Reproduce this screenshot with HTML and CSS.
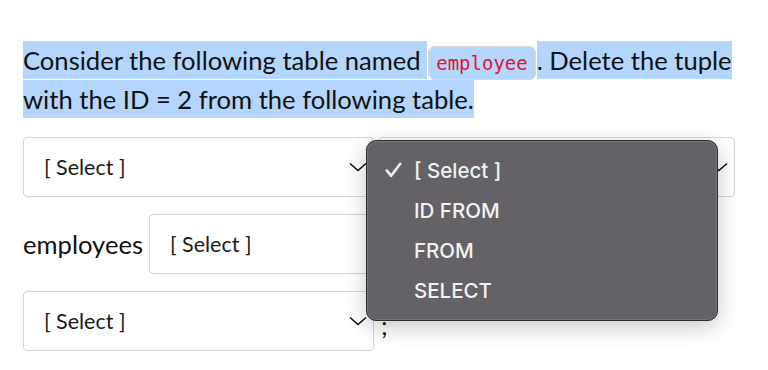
FILE: index.html
```html
<!DOCTYPE html>
<html lang="en">
<head>
  <meta charset="UTF-8" />
  <meta name="viewport" content="width=device-width, initial-scale=1.0"/>
  <title>Question</title>
  <link rel="stylesheet" href="styles.css">
</head>
<body>
  <div class="page">
    <p class="question"><span class="hl">Consider the following table named </span><code class="code">employee</code><span class="hl">. Delete the tuple with the ID = 2 from the following table.</span></p>

    <div class="answer">
      <div class="row">
        <div class="select">
          <span>[ Select ]</span>
          <svg class="chev" width="18" height="10" viewBox="0 0 18 10"><path d="M1 1.5 L9 8.5 L17 1.5" fill="none" stroke="#111" stroke-width="1.6"/></svg>
        </div>
        <div class="select wide">
          <span>[ Select ]</span>
          <svg class="chev" width="18" height="10" viewBox="0 0 18 10"><path d="M1 1.5 L9 8.5 L17 1.5" fill="none" stroke="#111" stroke-width="1.6"/></svg>
        </div>
      </div>

      <div class="row">
        <span class="word">employees</span>
        <div class="select">
          <span>[ Select ]</span>
          <svg class="chev" width="18" height="10" viewBox="0 0 18 10"><path d="M1 1.5 L9 8.5 L17 1.5" fill="none" stroke="#111" stroke-width="1.6"/></svg>
        </div>
      </div>

      <div class="row">
        <div class="select">
          <span>[ Select ]</span>
          <svg class="chev" width="18" height="10" viewBox="0 0 18 10"><path d="M1 1.5 L9 8.5 L17 1.5" fill="none" stroke="#111" stroke-width="1.6"/></svg>
        </div>
        <span class="word semi">;</span>
      </div>
    </div>

    <!-- open dropdown of the second select -->
    <ul class="menu">
      <li>
        <span class="mark"><svg width="17" height="16" viewBox="0 0 17 16"><path d="M1.8 8.5 L6.2 13.8 L15.2 1.8" fill="none" stroke="#f2f2f2" stroke-width="2.6" stroke-linecap="round" stroke-linejoin="round"/></svg></span>
        <span>[ Select ]</span>
      </li>
      <li><span class="mark"></span><span>ID FROM</span></li>
      <li><span class="mark"></span><span>FROM</span></li>
      <li><span class="mark"></span><span>SELECT</span></li>
    </ul>
  </div>
</body>
</html>
```

FILE: styles.css
```css
body {
  margin: 0;
  background-color: #ffffff;
  font-family: Lato, 'Open Sans', sans-serif;
  color: #111;
  overflow: hidden;
}

.page {
  position: relative;
  padding: 41px 23px 0 23px;
}

.question {
  margin: 0;
  font-size: 25.6px;
  line-height: 39px;
  width: 722px;
}

.hl {
  background-color: #b4d6fd;
  padding: 4px 0;
}

.code {
  font-family: 'DejaVu Sans Mono', monospace;
  font-size: 19px;
  line-height: 1;
  color: #e5132f;
  background-color: #b4d6fd;
  border: 1px solid #d9d9d9;
  border-radius: 7px;
  padding: 5px 7px;
  margin: 0 1px 0 1px;
}

.answer {
  display: flex;
  flex-direction: column;
  gap: 17px;
  margin-top: 18px;
}

.row {
  display: flex;
  align-items: center;
  gap: 4px;
}

.select {
  box-sizing: border-box;
  width: 351px;
  height: 60px;
  border: 1px solid #d4d4d4;
  border-radius: 4px;
  background-color: #fff;
  display: flex;
  align-items: center;
  justify-content: space-between;
  padding: 0 6px 0 20px;
  font-size: 21.5px;
  color: #1a1a1a;
}

.select.wide {
  width: 357px;
}

.word {
  font-size: 25.6px;
  margin-right: 2px;
}

.semi {
  margin-left: 3px;
  line-height: 1.2;
  align-self: flex-end;
  margin-bottom: 10px;
}

.menu {
  position: absolute;
  left: 366px;
  top: 140px;
  width: 352px;
  box-sizing: border-box;
  margin: 0;
  padding: 9px 0 10px 18px;
  list-style: none;
  background-color: #646267;
  border: 1px solid #2e2d30;
  border-radius: 10px;
  box-shadow: 0 6px 22px rgba(0,0,0,0.22), inset 0 0 0 1px rgba(255,255,255,0.12);
  font-family: Inter, 'Liberation Sans', sans-serif;
  font-size: 20.5px;
  font-weight: 500;
  color: #f2f2f2;
}

.menu li {
  height: 40px;
  display: flex;
  align-items: center;
}

.mark {
  width: 29px;
  flex-shrink: 0;
  display: flex;
  align-items: center;
}
```
